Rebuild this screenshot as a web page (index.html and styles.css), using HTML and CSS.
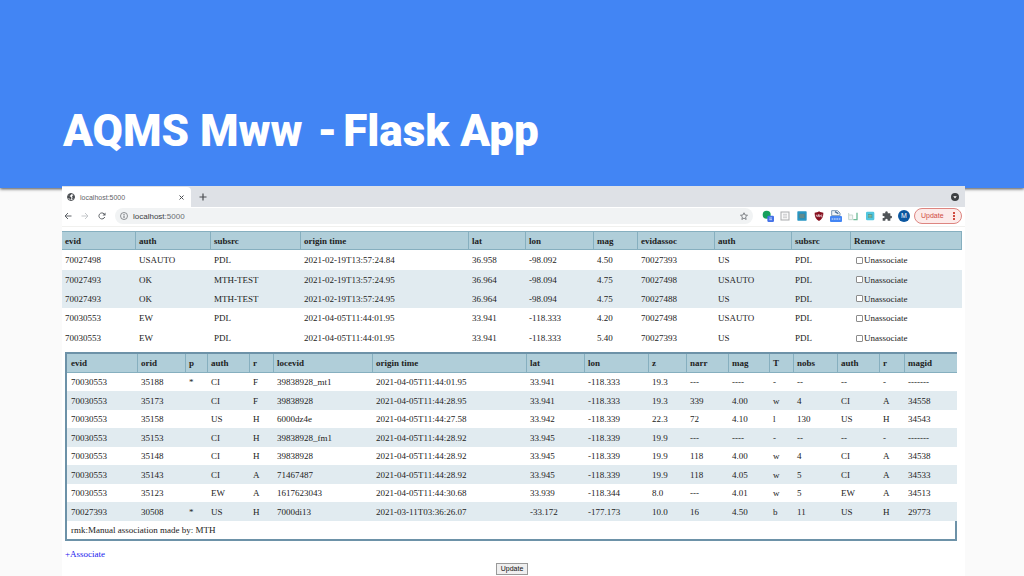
FILE: index.html
```html
<!DOCTYPE html>
<html lang="en">
<head>
<meta charset="utf-8">
<title>AQMS Mww - Flask App</title>
<link rel="stylesheet" href="styles.css">
</head>
<body class="slide">
<header class="banner"><h1 class="banner-title">AQMS Mww <span class="dash">-</span>Flask App</h1></header>
<main class="browser">
  <div class="tabstrip">
    <div class="tab">
      <svg class="icon" viewBox="0 0 16 16"><circle cx="8" cy="8" r="7" fill="#fff" stroke="#4a4d51" stroke-width="2"/><path d="M2 6 4 2l5-1-1 3-3 2 3 2 1 2-2 4-2-3-3-1zM10 6l4-2 1 5-3 4-2-2 1-2z" fill="#4a4d51"/></svg>
      <span class="tab-title">localhost:5000</span>
      <button class="plain-button" aria-label="Close tab"><svg class="icon icon-small" viewBox="0 0 10 10"><path d="m1 1 8 8M9 1 1 9" stroke="#4a4d51" stroke-width="2"/></svg></button>
    </div>
    <button class="plain-button" aria-label="New tab"><svg class="icon" viewBox="0 0 16 16"><path d="M8 1v14M1 8h14" stroke="#4a4d51" stroke-width="2.4"/></svg></button>
    <button class="plain-button push" aria-label="Search tabs"><svg class="icon" viewBox="0 0 16 16"><circle cx="8" cy="8" r="8" fill="#3c4043"/><path d="M4.500 6.500h7L8 11z" fill="#fff"/></svg></button>
  </div>
  <div class="toolbar">
    <nav class="nav-buttons">
      <button class="plain-button" aria-label="Back"><svg class="icon" viewBox="0 0 16 16"><path d="M15 8H2M8 2 2 8l6 6" fill="none" stroke="#5f6368" stroke-width="2"/></svg></button>
      <button class="plain-button" aria-label="Forward"><svg class="icon" viewBox="0 0 16 16"><path d="M1 8h13M8 2l6 6-6 6" fill="none" stroke="#c4c7ca" stroke-width="2"/></svg></button>
      <button class="plain-button" aria-label="Reload"><svg class="icon" viewBox="0 0 16 16"><path d="M13.500 10A6 6 0 1 1 12 3.500L14 6" fill="none" stroke="#5f6368" stroke-width="2"/><path d="M15 1v6H9z" fill="#5f6368"/></svg></button>
    </nav>
    <div class="address">
      <svg class="icon" viewBox="0 0 16 16"><circle cx="8" cy="8" r="7" fill="none" stroke="#6b6f73" stroke-width="1.500"/><path d="M8 7v5M8 4v2" stroke="#6b6f73" stroke-width="2"/></svg>
      <span class="address-text">localhost<span class="port">:5000</span></span>
      <svg class="icon push" viewBox="0 0 16 16"><path d="m8 1.500 2 4.500 5 .5-3.800 3.200L12.300 15 8 12.200 3.700 15l1.100-5.300L1 6.500 6 6z" fill="none" stroke="#5f6368" stroke-width="1.500"/></svg>
    </div>
    <div class="extensions">
      <svg class="ext" viewBox="0 0 36 36"><circle cx="14" cy="14" r="12" fill="#17a05d"/><rect x="16" y="17" width="20" height="19" rx="4" fill="#4472e8"/><path d="M22 24h8M22 29h8" stroke="#fff" stroke-width="2"/></svg>
      <svg class="ext" viewBox="0 0 36 36"><rect x="6" y="6" width="24" height="24" fill="#fafafa" stroke="#a9abad" stroke-width="3"/><path d="M12 13h12M12 18h12M12 23h12" stroke="#b5b7b9" stroke-width="2"/></svg>
      <svg class="ext" viewBox="0 0 36 36"><rect x="4" y="4" width="28" height="28" rx="2" fill="#2997c3"/><path d="M10 12h16v12H10zM15 12v12M21 12v12M10 18h16" fill="#8b9d89" stroke="#3f7e94" stroke-width="2"/></svg>
      <svg class="ext" viewBox="0 0 36 36"><path d="M18 4c5 3 9 4 13 4 0 12-3 19-13 25C8 27 5 20 5 8c5 0 9-1 13-4z" fill="#87101f"/><path d="M10 14v4q2 4 5 0v-4M17 13v7h3q2-3 0-5h-3M28 15q-5-1-5 3 1 4 5 2" fill="none" stroke="#fff" stroke-width="2"/></svg>
      <svg class="ext" viewBox="0 0 36 36"><path d="M5 17V2h18l7 7v8z" fill="#eef3f8" stroke="#7c98b4" stroke-width="3"/><path d="m15 5 10 6" stroke="#4a6f99" stroke-width="4"/><rect y="18" width="36" height="18" rx="3" fill="#4285f4"/><path d="M5 27h26" stroke="#a9c6f8" stroke-width="5" stroke-dasharray="5 2"/></svg>
      <svg class="ext" viewBox="0 0 36 36"><path d="M5 9v20h12V15H5" fill="#f5f5f5" stroke="#c7d7cf" stroke-width="3"/><path d="M19 29h11V8" fill="none" stroke="#6fbc98" stroke-width="4"/></svg>
      <svg class="ext" viewBox="0 0 36 36"><rect x="6" y="5" width="25" height="26" rx="4" fill="#52c7df"/><path d="M12 12h13v12H12z" fill="#3b9aa8"/><path d="M13 16h10M13 21h10" stroke="#d8d17e" stroke-width="2"/></svg>
      <svg class="ext" viewBox="0 0 36 36"><path d="M5 10h8c-3-8 10-8 7 0h8v8c7-3 7 9 0 7v7h-8c2-8-9-8-7 0H5v-8c8 2 8-8 0-6z" fill="#505458"/></svg>
      <button class="avatar" aria-label="Profile">M</button>
    </div>
    <button class="chrome-update"><span>Update</span><span class="dots"></span></button>
  </div>
  <form class="page">
    <table class="grid events">
      <colgroup><col class="w73"><col class="w75"><col class="w90"><col class="w168"><col class="w57"><col class="w68"><col class="w44"><col class="w77"><col class="w77"><col class="w59"><col class="w112"></colgroup>
      <thead><tr><th>evid</th><th>auth</th><th>subsrc</th><th>origin time</th><th>lat</th><th>lon</th><th>mag</th><th>evidassoc</th><th>auth</th><th>subsrc</th><th>Remove</th></tr></thead>
      <tbody>
        <tr><td>70027498</td><td>USAUTO</td><td>PDL</td><td>2021-02-19T13:57:24.84</td><td>36.958</td><td>-98.092</td><td>4.50</td><td>70027393</td><td>US</td><td>PDL</td><td><label class="remove"><input type="checkbox" class="check">Unassociate</label></td></tr>
        <tr class="stripe"><td>70027493</td><td>OK</td><td>MTH-TEST</td><td>2021-02-19T13:57:24.95</td><td>36.964</td><td>-98.094</td><td>4.75</td><td>70027498</td><td>USAUTO</td><td>PDL</td><td><label class="remove"><input type="checkbox" class="check">Unassociate</label></td></tr>
        <tr class="stripe"><td>70027493</td><td>OK</td><td>MTH-TEST</td><td>2021-02-19T13:57:24.95</td><td>36.964</td><td>-98.094</td><td>4.75</td><td>70027488</td><td>US</td><td>PDL</td><td><label class="remove"><input type="checkbox" class="check">Unassociate</label></td></tr>
        <tr><td>70030553</td><td>EW</td><td>PDL</td><td>2021-04-05T11:44:01.95</td><td>33.941</td><td>-118.333</td><td>4.20</td><td>70027498</td><td>USAUTO</td><td>PDL</td><td><label class="remove"><input type="checkbox" class="check">Unassociate</label></td></tr>
        <tr><td>70030553</td><td>EW</td><td>PDL</td><td>2021-04-05T11:44:01.95</td><td>33.941</td><td>-118.333</td><td>5.40</td><td>70027393</td><td>US</td><td>PDL</td><td><label class="remove"><input type="checkbox" class="check">Unassociate</label></td></tr>
      </tbody>
    </table>
    <div class="origins-box">
    <table class="grid origins">
      <colgroup><col class="w70"><col class="w48"><col class="w22"><col class="w42"><col class="w24"><col class="w99"><col class="w154"><col class="w58"><col class="w64"><col class="w38"><col class="w42"><col class="w41"><col class="w24"><col class="w44"><col class="w42"><col class="w25"><col class="w53"></colgroup>
      <thead><tr><th>evid</th><th>orid</th><th>p</th><th>auth</th><th>r</th><th>locevid</th><th>origin time</th><th>lat</th><th>lon</th><th>z</th><th>narr</th><th>mag</th><th>T</th><th>nobs</th><th>auth</th><th>r</th><th>magid</th></tr></thead>
      <tbody>
        <tr><td>70030553</td><td>35188</td><td>*</td><td>CI</td><td>F</td><td>39838928_mt1</td><td>2021-04-05T11:44:01.95</td><td>33.941</td><td>-118.333</td><td>19.3</td><td>---</td><td>----</td><td>-</td><td>--</td><td>--</td><td>-</td><td>-------</td></tr>
        <tr class="stripe"><td>70030553</td><td>35173</td><td></td><td>CI</td><td>F</td><td>39838928</td><td>2021-04-05T11:44:28.95</td><td>33.941</td><td>-118.333</td><td>19.3</td><td>339</td><td>4.00</td><td>w</td><td>4</td><td>CI</td><td>A</td><td>34558</td></tr>
        <tr><td>70030553</td><td>35158</td><td></td><td>US</td><td>H</td><td>6000dz4e</td><td>2021-04-05T11:44:27.58</td><td>33.942</td><td>-118.339</td><td>22.3</td><td>72</td><td>4.10</td><td>l</td><td>130</td><td>US</td><td>H</td><td>34543</td></tr>
        <tr class="stripe"><td>70030553</td><td>35153</td><td></td><td>CI</td><td>H</td><td>39838928_fm1</td><td>2021-04-05T11:44:28.92</td><td>33.945</td><td>-118.339</td><td>19.9</td><td>---</td><td>----</td><td>-</td><td>--</td><td>--</td><td>-</td><td>-------</td></tr>
        <tr><td>70030553</td><td>35148</td><td></td><td>CI</td><td>H</td><td>39838928</td><td>2021-04-05T11:44:28.92</td><td>33.945</td><td>-118.339</td><td>19.9</td><td>118</td><td>4.00</td><td>w</td><td>4</td><td>CI</td><td>A</td><td>34538</td></tr>
        <tr class="stripe"><td>70030553</td><td>35143</td><td></td><td>CI</td><td>A</td><td>71467487</td><td>2021-04-05T11:44:28.92</td><td>33.945</td><td>-118.339</td><td>19.9</td><td>118</td><td>4.05</td><td>w</td><td>5</td><td>CI</td><td>A</td><td>34533</td></tr>
        <tr><td>70030553</td><td>35123</td><td></td><td>EW</td><td>A</td><td>1617623043</td><td>2021-04-05T11:44:30.68</td><td>33.939</td><td>-118.344</td><td>8.0</td><td>---</td><td>4.01</td><td>w</td><td>5</td><td>EW</td><td>A</td><td>34513</td></tr>
        <tr class="stripe"><td>70027393</td><td>30508</td><td>*</td><td>US</td><td>H</td><td>7000di13</td><td>2021-03-11T03:36:26.07</td><td>-33.172</td><td>-177.173</td><td>10.0</td><td>16</td><td>4.50</td><td>b</td><td>11</td><td>US</td><td>H</td><td>29773</td></tr>
        <tr><td colspan="17" class="remark">rmk:Manual association made by: MTH</td></tr>
      </tbody>
    </table>
    </div>
    <a href="#associate" class="associate">+Associate</a>
    <button type="button" class="submit">Update</button>
  </form>
</main>
</body>
</html>
```
FILE: styles.css
```css
* { box-sizing: border-box; }
.slide {
  margin: 0;
  min-height: 100vh;
  display: flex;
  flex-direction: column;
  background: #fafafa;
}
.banner {
  padding: 104px 63px 29px;
  background: #4285f4;
  box-shadow: 0 1px 3px rgba(0, 0, 0, 0.7);
}
.banner-title {
  margin: 0;
  color: #fff;
  font: 900 44px/55px Roboto, sans-serif;
}
.dash { margin: 0 6px 0 4px; }
.browser {
  position: relative;
  flex: 1;
  display: flex;
  flex-direction: column;
  margin: -2px 59px 0 62px;
  background: #fff;
  font-family: "Liberation Sans", Arial, sans-serif;
}
.plain-button {
  display: flex;
  padding: 0;
  border: 0;
  background: none;
}
.icon { display: block; width: 8px; height: 8px; flex: none; }
.icon-small { width: 5px; height: 5px; }
.push { margin-left: auto; }
.tabstrip {
  display: flex;
  align-items: center;
  gap: 8px;
  padding-right: 6px;
  background: #dee1e6;
}
.tab {
  flex: 0 0 129px;
  height: 20px;
  margin-top: 1px;
  display: flex;
  align-items: center;
  justify-content: space-between;
  gap: 5px;
  padding: 0 7px 0 5px;
  background: #fff;
  border-radius: 0 4px 0 0;
}
.tab-title { flex: 1; color: #5f6368; font-size: 7px; }
.toolbar {
  display: flex;
  align-items: center;
  padding: 1px 3px 2px 2px;
  border-bottom: 1px solid #f1f1ef;
}
.nav-buttons { display: flex; gap: 9px; padding-right: 9px; }
.address {
  flex: 1;
  display: flex;
  align-items: center;
  gap: 5px;
  height: 16px;
  padding: 0 5px;
  border-radius: 8px;
  background: #f1f3f4;
}
.address-text { color: #3c4043; font-size: 8px; }
.port { color: #6a6e72; }
.extensions { display: flex; align-items: center; gap: 5px; padding: 0 4px 0 9px; }
.ext { width: 12px; height: 12px; }
.avatar {
  width: 12px;
  height: 12px;
  padding: 0;
  border: 0;
  border-radius: 50%;
  background: #0b57a0;
  color: #fff;
  font: 7px/12px "Liberation Sans", Arial, sans-serif;
}
.chrome-update {
  width: 48px;
  height: 16px;
  display: flex;
  align-items: center;
  justify-content: space-between;
  padding: 0 6px;
  border: 1px solid #dd8580;
  border-radius: 8px;
  background: #fcebea;
  color: #d04a42;
  font: 7px/12px "Liberation Sans", Arial, sans-serif;
}
.dots { height: 8px; border-left: 2px dotted #d04a42; }
.page {
  flex: 1;
  display: flex;
  flex-direction: column;
  align-items: stretch;
  padding: 4px 3px 1px 0;
  font: 9px/12px "Liberation Serif", "Times New Roman", serif;
  color: #222;
}
.grid {
  width: 100%;
  table-layout: fixed;
  border-collapse: separate;
  border-spacing: 0;
}
.grid th, .grid td {
  height: 18px;
  padding: 0 0 0 3px;
  border-left: 1px solid transparent;
  text-align: left;
  white-space: nowrap;
}
.grid th {
  border-left-color: #86afbf;
  background: #b0ced9;
}
.grid th:first-child, .grid td:first-child { border-left: 0; }
.origins th:first-child, .origins td:first-child { padding-left: 4px; }
.events th {
  height: 19px;
  border-top: 1px solid #86afbf;
  border-bottom: 1px solid #86afbf;
}
.events th:last-child { border-right: 1px solid #86afbf; }
.events td { height: 20px; }
.grid .stripe td { height: 19px; background: #e1ebf0; }
.remove { display: flex; align-items: center; gap: 1px; padding-left: 2px; }
.check {
  appearance: none;
  width: 7px;
  height: 7px;
  margin: 0;
  border: 1px solid #8c8c8c;
  border-radius: 1px;
  background: #fff;
}
.origins-box { padding: 4px 5px 7px 3px; }
.origins {
  border-left: 2px solid #6d92a8;
  border-top: 2px solid #6d92a8;
  border-bottom: 2px solid #6d92a8;
}
.origins th { height: 19px; border-bottom: 1px solid #86afbf; }
.grid .remark { border-right: 2px solid #6d92a8; }
.associate { align-self: flex-start; margin-left: 3px; color: #1a1aee; text-decoration: none; }
.submit {
  align-self: center;
  margin-top: 3px;
  padding: 0 4px;
  border: 1px solid #999;
  background: #efefef;
  color: #111;
  font: 7px/10px "Liberation Sans", Arial, sans-serif;
}
.w22 { width: 22px; }
.w24 { width: 24px; }
.w25 { width: 25px; }
.w38 { width: 38px; }
.w41 { width: 41px; }
.w42 { width: 42px; }
.w44 { width: 44px; }
.w48 { width: 48px; }
.w53 { width: 53px; }
.w57 { width: 57px; }
.w58 { width: 58px; }
.w59 { width: 59px; }
.w64 { width: 64px; }
.w68 { width: 68px; }
.w70 { width: 70px; }
.w73 { width: 73px; }
.w75 { width: 75px; }
.w77 { width: 77px; }
.w90 { width: 90px; }
.w99 { width: 99px; }
.w112 { width: 112px; }
.w154 { width: 154px; }
.w168 { width: 168px; }
```
